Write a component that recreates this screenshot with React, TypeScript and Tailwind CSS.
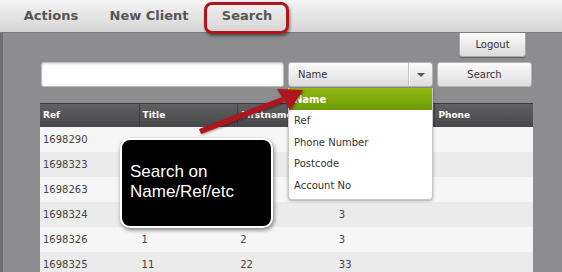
import React from "react"

const rows = [
  ["1698290", "", "", "", ""],
  ["1698323", "", "", "", ""],
  ["1698263", "", "", "", ""],
  ["1698324", "1", "2", "3", ""],
  ["1698326", "1", "2", "3", ""],
  ["1698325", "11", "22", "33", ""],
]

// 4th column title sits under the open dropdown in the shot
const headers = ["Ref", "Title", "Firstname", "", "Phone"]

const options = ["Ref", "Phone Number", "Postcode", "Account No"]

export default function App() {
  return (
    <div className="relative w-[562px] h-[272px] overflow-hidden font-['DejaVu_Sans',sans-serif] bg-[#8d8d8f]">
      {/* top nav */}
      <div className="flex h-[33px] pl-[2px] bg-gradient-to-b from-[#f4f4f4] to-[#d5d5d5] border-b border-[#7c7c7c]">
        {["Actions", "New Client", "Search"].map((item) => (
          <div key={item} className="w-[98px] flex items-center justify-center text-[13px] font-bold text-[#555555]">
            {item}
          </div>
        ))}
      </div>

      {/* main area */}
      <div className="flex flex-col h-[239px] border-l-[3px] border-[#6f6f71] pl-[37px] pr-[29px]">
        <div className="flex shrink-0 justify-end pr-[7px]">
          <button className="w-[67px] h-[24px] rounded-b-[3px] bg-gradient-to-b from-[#fbfbfb] to-[#dcdcdc] border border-t-0 border-[#a8a8a8] text-[10px] text-[#333333] shadow-[0_1px_1px_rgba(0,0,0,0.3)]">
            Logout
          </button>
        </div>

        <div className="flex shrink-0 gap-[4px] mt-[5px] h-[25px] pl-[1px]">
          <div className="w-[243px] rounded-[3px] bg-white border border-[#bdbdbd] shadow-[inset_0_1px_2px_rgba(0,0,0,0.15)]" />
          <div className="w-[145px] flex rounded-[3px] bg-gradient-to-b from-[#fbfbfb] to-[#dedede] border border-[#b4b4b4] text-[10px] text-[#333333]">
            <div className="flex-1 flex items-center pl-[9px] border-r border-[#c4c4c4]">Name</div>
            <div className="w-[23px] flex items-center justify-center border-l border-white">
              <svg width="8" height="4" viewBox="0 0 8 4">
                <path d="M0 0 L8 0 L4 4 Z" fill="#555555" />
              </svg>
            </div>
          </div>
          <button className="w-[95px] rounded-[3px] bg-gradient-to-b from-[#fbfbfb] to-[#dedede] border border-[#b4b4b4] text-[10px] text-[#333333]">
            Search
          </button>
        </div>

        {/* results table */}
        <div className="shrink-0 mt-[16px] w-[493px]">
          <div className="grid grid-cols-5 h-[24px] bg-gradient-to-b from-[#616163] to-[#47474a] border-t border-[#3a3a3a] text-[9px] font-bold text-white">
            {headers.map((h, i) => (
              <div key={i} className={`flex items-center pl-[3px] ${i > 0 ? "border-l border-[#3e3e40]" : ""}`}>
                {h}
              </div>
            ))}
          </div>
          {rows.map((row, r) => (
            <div
              key={row[0]}
              className={`grid grid-cols-5 h-[25px] text-[10px] text-[#444444] ${r % 2 === 0 ? "bg-[#f6f6f6]" : "bg-[#ebebeb]"}`}
            >
              {row.map((c, i) => (
                <div key={i} className="flex items-center pl-[3px]">
                  {c}
                </div>
              ))}
            </div>
          ))}
        </div>
      </div>

      {/* red highlight around Search tab */}
      <div className="absolute left-[204px] top-[2px] w-[85px] h-[32px] rounded-[8px] border-[3px] border-[#b0141c] shadow-[1px_2px_3px_rgba(0,0,0,0.45)]" />

      {/* dropdown menu */}
      <div className="absolute left-[288px] top-[88px] w-[145px] h-[112px] bg-white rounded-b-[4px] border border-t-0 border-[#c8c8c8] shadow-[0_1px_3px_rgba(0,0,0,0.35)] text-[10px] text-[#333333]">
        <div className="h-[22px] flex items-center pl-[5px] bg-gradient-to-b from-[#8fba12] to-[#6e9a08] font-bold text-white">
          Name
        </div>
        {options.map((o) => (
          <div key={o} className="h-[21.5px] flex items-center pl-[5px]">
            {o}
          </div>
        ))}
      </div>

      {/* callout */}
      <div className="absolute left-[120px] top-[138px] w-[153px] h-[90px] rounded-[10px] bg-black border-2 border-white shadow-[1px_2px_4px_rgba(0,0,0,0.5)] pl-[8px] pt-[22px] font-['Liberation_Sans',Arial,sans-serif] text-[17px] leading-[20px] text-white">
        <div>Search on</div>
        <div>Name/Ref/etc</div>
      </div>

      {/* arrow */}
      <svg className="absolute left-0 top-0" width="562" height="272" viewBox="0 0 562 272">
        <g style={{ filter: "drop-shadow(1px 1px 1px rgba(0,0,0,0.4))" }}>
          <path d="M201 134 L199 129 L282 97 L284 102 Z" fill="#b0141c" />
          <path d="M303 90 L277 89 L290 110 Z" fill="#b0141c" />
        </g>
      </svg>
    </div>
  )
}
